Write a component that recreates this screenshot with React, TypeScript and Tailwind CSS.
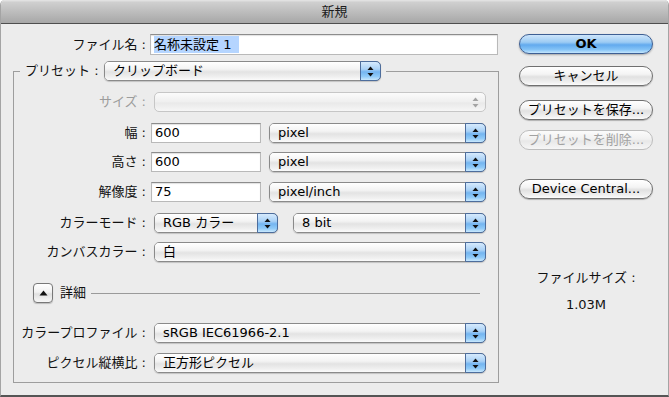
import React from "react";

const FONT = "font-['DejaVu_Sans','Noto_Sans_CJK_JP',sans-serif]";

function Arrows({ color }: { color: string }) {
  return (
    <svg width="7" height="11" viewBox="0 0 7 11">
      <polygon points="3.5,0.5 6.5,4 0.5,4" fill={color} />
      <polygon points="0.5,7 6.5,7 3.5,10.5" fill={color} />
    </svg>
  );
}

function Popup({
  w,
  label,
  disabled,
  ml,
}: {
  w: string;
  label?: string;
  disabled?: boolean;
  ml?: string;
}) {
  if (disabled) {
    return (
      <div
        className={`${w} ${ml ?? ""} h-[20px] flex rounded-[5px] border border-[#c6c6c6] bg-[linear-gradient(to_bottom,#fbfbfb,#efefef_50%,#e9e9e9_55%,#f6f6f6)]`}
      >
        <div className="flex-1" />
        <div className="w-[20px] flex items-center justify-center">
          <Arrows color="#a3a3a3" />
        </div>
      </div>
    );
  }
  return (
    <div
      className={`${w} ${ml ?? ""} h-[20px] flex rounded-[5px] border border-[#8a8a8a] shadow-[0_1px_1px_rgba(0,0,0,0.18)]`}
    >
      <div className="flex-1 flex items-center pl-[8px] rounded-l-[4px] text-[13px] text-black bg-[linear-gradient(to_bottom,#ffffff,#f3f3f3_40%,#e3e3e3_55%,#f1f1f1_85%,#fbfbfb)] whitespace-nowrap overflow-hidden">
        {label}
      </div>
      <div className="w-[21px] -my-px -mr-px flex items-center justify-center rounded-r-[5px] border border-[#4d6d9c] bg-[linear-gradient(to_bottom,#d6eafd,#a9d1f6_40%,#74b5f0_55%,#8fcaf8_80%,#c9e8fd)]">
        <Arrows color="#111111" />
      </div>
    </div>
  );
}

function TextField({ w, value }: { w: string; value: string }) {
  return (
    <div
      className={`${w} ml-[5px] h-[20px] bg-white border border-[#b9b9b9] border-t-[#8c8c8c] shadow-[inset_0_1px_1px_rgba(0,0,0,0.12)] flex items-center pl-[3px] text-[13px] text-black`}
    >
      {value}
    </div>
  );
}

function Label({ text, gray }: { text: string; gray?: boolean }) {
  return (
    <div
      className={`w-[132px] shrink-0 text-right text-[13px] whitespace-nowrap ${gray ? "text-[#9c9c9c]" : "text-[#111]"}`}
    >
      {text}
    </div>
  );
}

function PillButton({
  text,
  mt,
  variant,
}: {
  text: string;
  mt: string;
  variant?: "ok" | "disabled";
}) {
  if (variant === "ok") {
    return (
      <div
        className={`${mt} w-[134px] h-[20px] rounded-full border border-[#3e5f93] flex items-center justify-center text-[13px] font-bold text-black shadow-[0_1px_2px_rgba(0,0,0,0.3)] bg-[linear-gradient(to_bottom,#cde5fb,#9ccbf3_40%,#62aaee_55%,#82c2f6_80%,#c4e6fd)]`}
      >
        {text}
      </div>
    );
  }
  if (variant === "disabled") {
    return (
      <div
        className={`${mt} w-[134px] h-[20px] rounded-full border border-[#bdbdbd] flex items-center justify-center text-[13px] text-[#a2a2a2] bg-[linear-gradient(to_bottom,#fbfbfb,#f1f1f1_45%,#e8e8e8_55%,#f6f6f6)]`}
      >
        {text}
      </div>
    );
  }
  return (
    <div
      className={`${mt} w-[134px] h-[20px] rounded-full border border-[#707070] flex items-center justify-center text-[13px] text-black shadow-[0_1px_1px_rgba(0,0,0,0.25)] bg-[linear-gradient(to_bottom,#ffffff,#f4f4f4_40%,#e1e1e1_55%,#f0f0f0_85%,#fcfcfc)]`}
    >
      {text}
    </div>
  );
}

export default function App() {
  return (
    <div className={`${FONT} w-[669px] h-[397px] overflow-hidden bg-white`}>
      <div className="w-full h-full flex flex-col bg-[#ececec] rounded-t-[5px] border-x border-[#a4a4a4] border-b-2 border-b-[#555555]">
        {/* title bar */}
        <div className="h-[24px] shrink-0 flex items-center justify-center rounded-t-[5px] border-b border-[#4e4e4e] bg-[linear-gradient(to_bottom,#e6e6e6,#cfcfcf_10%,#b9b9b9_60%,#a7a7a7)] text-[13px] text-[#1c1c1c]">
          新規
        </div>

        {/* body */}
        <div className="flex">
          {/* left column */}
          <div className="w-[498px] shrink-0 flex flex-col">
            <div className="mt-[10px] flex items-center h-[21px]">
              <div className="w-[145px] shrink-0 text-right text-[13px] text-[#111] whitespace-nowrap">
                ファイル名 :
              </div>
              <div className="ml-[4px] w-[348px] h-[21px] bg-white border border-[#b9b9b9] border-t-[#8c8c8c] shadow-[inset_0_1px_1px_rgba(0,0,0,0.12)] flex items-center pl-[3px]">
                <span className="bg-[#b5d5ff] h-[17px] leading-[17px] pr-[8px] text-[13px] text-black whitespace-nowrap">
                  名称未設定 1
                </span>
              </div>
            </div>

            <fieldset className="mt-[6px] ml-[12px] w-[486px] border border-[#9d9d9d] pb-[9px]">
              <legend className="ml-[6px] px-[5px]">
                <div className="flex items-center h-[20px]">
                  <div className="text-[13px] text-[#111] whitespace-nowrap w-[75px]">
                    プリセット :
                  </div>
                  <Popup w="w-[277px]" label="クリップボード" ml="ml-[4px]" />
                </div>
              </legend>

              <div className="mt-[11px] flex items-center">
                <Label text="サイズ :" gray />
                <Popup w="w-[332px]" disabled ml="ml-[8px]" />
              </div>

              <div className="mt-[11px] flex items-center">
                <Label text="幅 :" />
                <TextField w="w-[110px]" value="600" />
                <Popup w="w-[217px]" label="pixel" ml="ml-[8px]" />
              </div>

              <div className="mt-[9px] flex items-center">
                <Label text="高さ :" />
                <TextField w="w-[110px]" value="600" />
                <Popup w="w-[217px]" label="pixel" ml="ml-[8px]" />
              </div>

              <div className="mt-[10px] flex items-center">
                <Label text="解像度 :" />
                <TextField w="w-[110px]" value="75" />
                <Popup w="w-[217px]" label="pixel/inch" ml="ml-[8px]" />
              </div>

              <div className="mt-[11px] flex items-center">
                <Label text="カラーモード :" />
                <Popup w="w-[124px]" label="RGB カラー" ml="ml-[8px]" />
                <Popup w="w-[193px]" label="8 bit" ml="ml-[15px]" />
              </div>

              <div className="mt-[9px] flex items-center">
                <Label text="カンバスカラー :" />
                <Popup w="w-[332px]" label="白" ml="ml-[8px]" />
              </div>

              <div className="mt-[21px] flex items-center h-[20px]">
                <div className="ml-[19px] w-[20px] h-[20px] rounded-[4px] border border-[#787878] flex items-center justify-center shadow-[0_1px_1px_rgba(0,0,0,0.2)] bg-[linear-gradient(to_bottom,#ffffff,#f1f1f1_45%,#e0e0e0_55%,#f7f7f7)]">
                  <svg width="9" height="6" viewBox="0 0 9 6">
                    <polygon points="4.5,0.5 8.5,5.5 0.5,5.5" fill="#111" />
                  </svg>
                </div>
                <div className="ml-[7px] text-[13px] text-[#111]">詳細</div>
                <div className="ml-[5px] mr-[18px] flex-1 h-px bg-[#9a9a9a]" />
              </div>

              <div className="mt-[20px] flex items-center">
                <Label text="カラープロファイル :" />
                <Popup w="w-[332px]" label="sRGB IEC61966-2.1" ml="ml-[8px]" />
              </div>

              <div className="mt-[10px] flex items-center">
                <Label text="ピクセル縦横比 :" />
                <Popup w="w-[332px]" label="正方形ピクセル" ml="ml-[8px]" />
              </div>
            </fieldset>
          </div>

          {/* right column */}
          <div className="ml-[20px] w-[134px] flex flex-col items-center">
            <PillButton text="OK" mt="mt-[10px]" variant="ok" />
            <PillButton text="キャンセル" mt="mt-[12px]" />
            <PillButton text="プリセットを保存..." mt="mt-[14px]" />
            <PillButton text="プリセットを削除..." mt="mt-[10px]" variant="disabled" />
            <PillButton text="Device Central..." mt="mt-[29px]" />
            <div className="mt-[71px] text-[13px] text-[#111] leading-[16px] whitespace-nowrap">
              ファイルサイズ :
            </div>
            <div className="mt-[11px] text-[13px] text-[#111] leading-[16px]">1.03M</div>
          </div>
        </div>
      </div>
    </div>
  );
}
